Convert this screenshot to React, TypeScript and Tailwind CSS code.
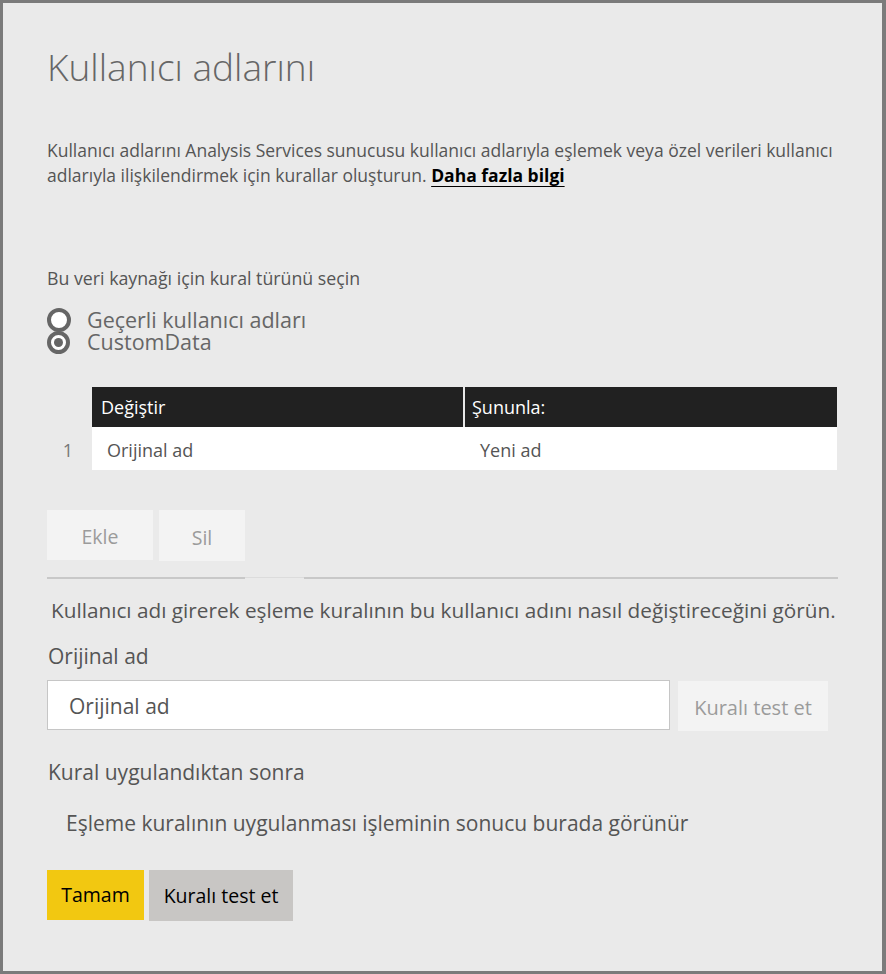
import React from "react";

const font = { fontFamily: '"Open Sans", "Noto Sans", "Liberation Sans", sans-serif' };

export default function App() {
  return (
    <div
      className="w-[886px] h-[974px] bg-[#eaeaea] border-t-[3px] border-l-[3px] border-b-[3px] border-r-4 border-[#7b7b7b] box-border pl-[44px] pr-[44px] flex flex-col overflow-hidden"
      style={font}
    >
      <h1 className="mt-[42px] h-[44px] leading-[44px] text-[37px] font-light text-[#666666] whitespace-nowrap">
        Kullanıcı adlarını
      </h1>

      <p className="mt-[49px] text-[17.5px] leading-[25px] text-[#555555] whitespace-nowrap">
        Kullanıcı adlarını Analysis Services sunucusu kullanıcı adlarıyla eşlemek veya özel verileri kullanıcı
        <br />
        adlarıyla ilişkilendirmek için kurallar oluşturun.{" "}
        <a className="font-bold text-black underline underline-offset-[4px] decoration-1">Daha fazla bilgi</a>
      </p>

      <div className="mt-[80px] text-[17.75px] leading-[20px] text-[#555555] whitespace-nowrap">
        Bu veri kaynağı için kural türünü seçin
      </div>

      <div className="mt-[20px] flex flex-col">
        <div className="h-[23px] flex items-center">
          <span className="w-[24px] h-[24px] rounded-full border-[4px] border-[#666666] bg-white box-border shrink-0" />
          <span className="ml-[16px] text-[21.5px] leading-[22px] text-[#666666] whitespace-nowrap">
            Geçerli kullanıcı adları
          </span>
        </div>
        <div className="h-[22px] flex items-center">
          <span className="w-[23px] h-[23px] rounded-full border-[4px] border-[#666666] bg-white box-border shrink-0 flex items-center justify-center">
            <span className="w-[9px] h-[9px] rounded-full bg-[#666666]" />
          </span>
          <span className="ml-[17px] text-[21.5px] leading-[22px] text-[#666666] whitespace-nowrap">CustomData</span>
        </div>
      </div>

      <div className="mt-[34px] flex flex-col">
        <div className="flex h-[40px]">
          <div className="w-[45px]" />
          <div className="w-[371px] bg-[#212121] text-white text-[18px] flex items-center pl-[9px]">Değiştir</div>
          <div className="w-[2px] bg-[#e8e8e8]" />
          <div className="w-[372px] bg-[#212121] text-white text-[18px] flex items-center pl-[7px]">Şununla:</div>
        </div>
        <div className="flex h-[43px]">
          <div className="w-[45px] flex items-center justify-center text-[18px] text-[#777777] pr-[3px] pt-[4px]">1</div>
          <div className="w-[745px] bg-white flex items-center text-[18px] text-[#555555] pt-[4px]">
            <div className="w-[373px] pl-[15px]">Orijinal ad</div>
            <div className="pl-[15px]">Yeni ad</div>
          </div>
        </div>
      </div>

      <div className="mt-[40px] flex gap-[6px]">
        <button className="w-[106px] h-[50px] bg-[#f3f3f3] text-[19.5px] text-[#9b9b9b] pt-[4px]">Ekle</button>
        <button className="w-[86px] h-[51px] bg-[#f3f3f3] text-[19.5px] text-[#9b9b9b] pt-[4px]">Sil</button>
      </div>

      <div className="mt-[16px] flex h-[2px]">
        <div className="w-[198px] bg-[#c8c8c8]" />
        <div className="w-[59px] h-[1px] bg-[#dcdcdc]" />
        <div className="flex-1 bg-[#c8c8c8]" />
      </div>

      <div className="mt-[19px] pl-[4px] text-[20.75px] leading-[24px] text-[#555555] whitespace-nowrap">
        Kullanıcı adı girerek eşleme kuralının bu kullanıcı adını nasıl değiştireceğini görün.
      </div>

      <div className="mt-[22px] pl-[1px] text-[21px] leading-[24px] text-[#555555]">Orijinal ad</div>

      <div className="mt-[12px] flex">
        <div className="w-[623px] h-[50px] bg-white border border-[#c6c6c6] flex items-center pl-[21px] pt-[3px] text-[21px] text-[#555555] box-border">
          Orijinal ad
        </div>
        <button className="ml-[8px] mt-[1px] w-[150px] h-[50px] bg-[#f3f3f3] text-[20px] text-[#9b9b9b] pt-[3px]">
          Kuralı test et
        </button>
      </div>

      <div className="mt-[29px] pl-[1px] text-[21px] leading-[24px] text-[#555555]">Kural uygulandıktan sonra</div>

      <div className="mt-[27px] pl-[19px] text-[21px] leading-[24px] text-[#555555] whitespace-nowrap">
        Eşleme kuralının uygulanması işleminin sonucu burada görünür
      </div>

      <div className="mt-[35px] flex gap-[5px]">
        <button className="w-[97px] h-[50px] bg-[#f2c811] text-[19.5px] text-black">Tamam</button>
        <button className="w-[144px] h-[51px] bg-[#c8c6c4] text-[19.5px] text-black">Kuralı test et</button>
      </div>
    </div>
  );
}
